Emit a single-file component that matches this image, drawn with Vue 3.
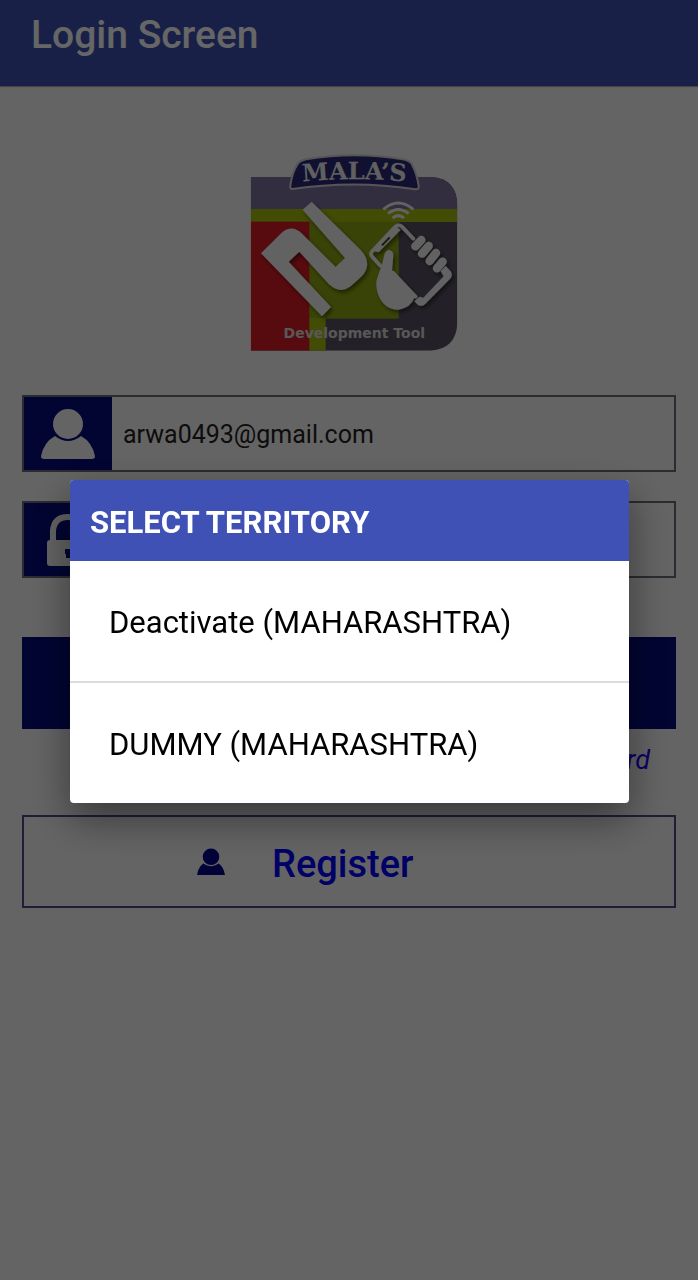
<script setup>
import { ref } from 'vue'

const email = ref('arwa0493@gmail.com')
const password = ref('')
const territories = ['Deactivate (MAHARASHTRA)', 'DUMMY (MAHARASHTRA)']
const selected = ref('')
</script>

<template>
  <div class="screen">
    <header class="bar">
      <h1>Login Screen</h1>
    </header>

    <main class="content">
      <svg class="logo" viewBox="0 15 654 609" role="img" aria-label="Mala's Development Tool">
        <defs>
          <clipPath id="tile">
            <path d="M32 96H572Q652 100 652 184V532Q650 612 572 617H32Z" />
          </clipPath>
          <filter id="soft" x="-20%" y="-20%" width="140%" height="140%">
            <feDropShadow dx="6" dy="8" stdDeviation="7" flood-color="#000" flood-opacity="0.5" />
          </filter>
        </defs>
        <g clip-path="url(#tile)">
          <rect x="32" y="96" width="622" height="522" fill="#595463" />
          <rect x="32" y="96" width="622" height="96" fill="#80739f" />
          <rect x="32" y="192" width="622" height="39" fill="#a6bd0c" />
          <rect x="32" y="230" width="178" height="388" fill="#da1c24" />
          <rect x="208" y="230" width="268" height="291" fill="#91a812" />
          <rect x="208" y="519" width="49" height="99" fill="#a6bd0c" />
        </g>
        <path d="M158 132Q149 132 151 122Q156 82 174 55Q182 46 198 43Q343 18 488 43Q506 46 514 55Q530 84 536 122Q537 134 526 133Q343 104 158 132Z" fill="#2d2a78" stroke="#d8d8de" stroke-width="6" />
        <path id="arc" d="M166 112Q343 94 520 112" fill="none" />
        <text class="brand"><textPath href="#arc" startOffset="50%" text-anchor="middle">MALA’S</textPath></text>
        <g filter="url(#soft)">
          <path d="M63 325L125 263Q157 236 187 267L287 366L315 339L188 194L215 170L362 315Q399 355 366 393L332 424Q301 448 267 418L178 320L146 350L273 486L246 514Z" fill="#f5f5f5" />
        </g>
        <g fill="none" stroke="#f5f5f5" stroke-width="9">
          <path d="M430 193Q475 155 520 193" />
          <path d="M444 206Q475 181 506 206" />
          <path d="M458 219Q475 205 492 219" />
        </g>
        <g filter="url(#soft)">
          <path d="M520 281L490 249Q476 232 462 249L396 319Q389 328 398 337L421 362M459 383L527 455" fill="none" stroke="#f5f5f5" stroke-width="11" stroke-linecap="round" />
          <path d="M397 317L464 243L482 254L416 322Z" fill="#f5f5f5" />
          <path d="M449 277L426 301" stroke="#3c4418" stroke-width="6" />
          <path d="M410 405Q418 379 426 359L434 326Q444 307 457 320Q460 324 460 332L456 376Q476 402 499 423L524 457Q512 489 476 494Q431 493 415 449Q406 425 410 405Z" fill="#f5f5f5" />
          <path d="M617 363L632 379Q639 389 632 400L555 478Q546 486 534 480L523 469L539 455L550 458L611 394L602 379Z" fill="#f5f5f5" />
          <g stroke="#f5f5f5" stroke-width="25" stroke-linecap="round">
            <path d="M526 304L544 285" />
            <path d="M546 326L566 303" />
            <path d="M569 348L588 324" />
            <path d="M591 370L608 350" />
          </g>
        </g>
        <text class="tagline" x="343" y="578" text-anchor="middle">Development Tool</text>
      </svg>

      <form class="form" @submit.prevent>
        <div class="field">
          <label class="tag" for="email" aria-label="Email">
            <svg viewBox="0 0 54 52" width="54" height="52">
              <circle cx="27" cy="16" r="15" />
              <path d="M14 28Q27 38 40 28Q51 34 54 48Q54 51 51 51H3Q0 51 0 48Q3 34 14 28Z" />
            </svg>
          </label>
          <input id="email" v-model="email" type="email">
        </div>
        <div class="field">
          <label class="tag" for="password" aria-label="Password">
            <svg viewBox="0 0 42 52" width="42" height="52">
              <path class="shackle" d="M6 27V17Q7 3 21 3Q35 3 36 17V27" />
              <rect y="26" width="42" height="26" rx="3" />
              <path class="keyhole" d="M18 35H24V40H23V44H19V40H18Z" />
            </svg>
          </label>
          <input id="password" v-model="password" type="password">
        </div>
        <button class="login" type="submit" aria-label="Login"></button>
        <a class="forgot" href="#">Forgot Password</a>
        <button class="register" type="button">
          <svg viewBox="0 0 54 52" width="28" height="28">
            <circle cx="27" cy="16" r="16" />
            <path d="M12 29Q27 39 42 29Q52 37 54 51H0Q2 37 12 29Z" />
          </svg>
          <span>Register</span>
        </button>
      </form>
    </main>

    <div class="backdrop">
      <section class="dialog" role="dialog" aria-modal="true" aria-labelledby="dialog-title">
        <h2 id="dialog-title">SELECT TERRITORY</h2>
        <ul>
          <li v-for="name in territories" :key="name">
            <button type="button" @click="selected = name">{{ name }}</button>
          </li>
        </ul>
      </section>
    </div>
  </div>
</template>

<style>
body {
  margin: 0;
  background: #fafafa;
}
</style>

<style scoped>
.screen {
  min-height: 100vh;
  box-sizing: border-box;
  font-family: Roboto, "Liberation Sans", sans-serif;
}
.screen * {
  box-sizing: border-box;
}
.bar {
  height: 86px;
  padding: 11px 31px;
  background: #3f51b5;
  box-shadow: 0 1px 1px rgba(0, 0, 0, 0.3);
}
h1 {
  margin: 0;
  font-size: 39px;
  line-height: 48px;
  font-weight: 500;
  color: #fff;
}
.content {
  padding: 64px 22px 0;
}
.logo {
  display: block;
  width: 218px;
  height: 203px;
  margin: 0 auto 42px;
}
.brand {
  font: bold 72px "DejaVu Serif", serif;
  fill: #f0f0f0;
}
.tagline {
  font: bold 42px "DejaVu Sans", sans-serif;
  fill: #dcdcdc;
}
.form {
  display: flex;
  flex-direction: column;
}
.field {
  display: flex;
  height: 77px;
  margin-bottom: 29px;
  border: 2px solid #6b6e7d;
}
.tag {
  display: flex;
  align-items: center;
  justify-content: center;
  flex: 0 0 88px;
  background: #050c7d;
  fill: #fafafa;
}
.shackle {
  fill: none;
  stroke: #fafafa;
  stroke-width: 6;
}
.keyhole {
  fill: #050c7d;
}
.field input {
  flex: 1;
  min-width: 0;
  padding: 2px 11px 0;
  border: 0;
  outline: 0;
  background: transparent;
  font: 25px Roboto, sans-serif;
  color: #222;
}
.login {
  height: 92px;
  margin-top: 30px;
  border: 0;
  background: #050c7d;
}
.forgot {
  align-self: flex-end;
  margin: 15px 26px 0 0;
  font-size: 27px;
  line-height: 32px;
  font-style: italic;
  text-decoration: none;
  color: #2800ff;
}
.register {
  display: flex;
  align-items: center;
  gap: 47px;
  height: 93px;
  margin-top: 39px;
  padding: 0 0 0 173px;
  border: 2px solid #4b4b8f;
  background: transparent;
  font: 500 38px Roboto, sans-serif;
  color: #00f;
}
.register svg {
  fill: #05058c;
}
.register span {
  padding-top: 4px;
  line-height: 48px;
}
.backdrop {
  position: fixed;
  inset: 0;
  display: flex;
  align-items: center;
  padding: 2px 69px 0 70px;
  background: rgba(0, 0, 0, 0.6);
}
.dialog {
  flex: 1;
  border-radius: 4px;
  overflow: hidden;
  background: #fff;
  box-shadow: 0 16px 40px rgba(0, 0, 0, 0.45);
}
h2 {
  margin: 0;
  padding: 4px 20px 0;
  font-size: 31px;
  line-height: 77px;
  font-weight: 700;
  color: #fff;
  background: #3f51b5;
}
ul {
  margin: 0;
  padding: 0;
  list-style: none;
}
li + li {
  border-top: 2px solid #dcdcdc;
}
li button {
  display: block;
  width: 100%;
  height: 120px;
  padding: 4px 39px 0;
  border: 0;
  background: transparent;
  text-align: left;
  font: 31px Roboto, sans-serif;
  color: #000;
}
</style>
